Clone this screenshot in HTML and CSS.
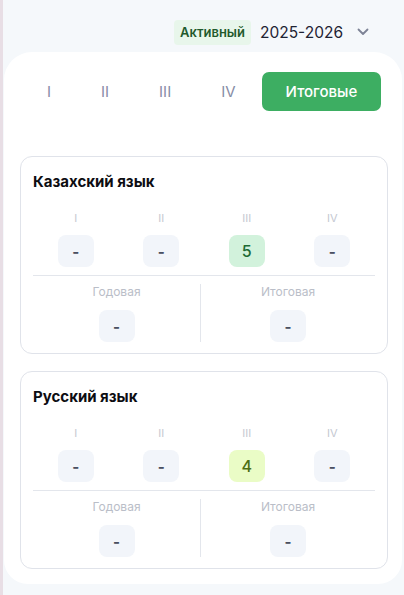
FILE: index.html
```html
<!DOCTYPE html>
<html lang="ru">
<head>
<meta charset="utf-8">
<link rel="stylesheet" href="styles.css">
</head>
<body>
<div class="page">
  <header class="top">
    <span class="badge">Активный</span>
    <span class="year">2025-2026</span>
    <svg class="chev" width="12" height="8" viewBox="0 0 12 8"><path d="M1.5 1.5 L6 6 L10.5 1.5" fill="none" stroke="#7d8396" stroke-width="1.8" stroke-linecap="round" stroke-linejoin="round"/></svg>
  </header>
  <main class="panel">
    <nav class="tabs">
      <span class="tab">I</span>
      <span class="tab">II</span>
      <span class="tab">III</span>
      <span class="tab">IV</span>
      <span class="tab active">Итоговые</span>
    </nav>
    <section class="card">
      <h2 class="title">Казахский язык</h2>
      <div class="quarters">
        <div class="q"><span class="ql">I</span><span class="box">-</span></div>
        <div class="q"><span class="ql">II</span><span class="box">-</span></div>
        <div class="q"><span class="ql">III</span><span class="box g5">5</span></div>
        <div class="q"><span class="ql">IV</span><span class="box">-</span></div>
      </div>
      <div class="totals">
        <div class="t"><span class="tl">Годовая</span><span class="box">-</span></div>
        <div class="t sep"><span class="tl">Итоговая</span><span class="box">-</span></div>
      </div>
    </section>
    <section class="card">
      <h2 class="title">Русский язык</h2>
      <div class="quarters">
        <div class="q"><span class="ql">I</span><span class="box">-</span></div>
        <div class="q"><span class="ql">II</span><span class="box">-</span></div>
        <div class="q"><span class="ql">III</span><span class="box g4">4</span></div>
        <div class="q"><span class="ql">IV</span><span class="box">-</span></div>
      </div>
      <div class="totals">
        <div class="t"><span class="tl">Годовая</span><span class="box">-</span></div>
        <div class="t sep"><span class="tl">Итоговая</span><span class="box">-</span></div>
      </div>
    </section>
  </main>
</div>
</body>
</html>
```

FILE: styles.css
```css
* { box-sizing: border-box; }
html, body { margin: 0; padding: 0; }
body {
  background: #f5f8fb;
  font-family: Inter, "Noto Sans", sans-serif;
  width: 404px;
  height: 595px;
  overflow: hidden;
}
.page {
  border-left: 3px solid #e8dee5;
  min-height: 595px;
}
.top {
  height: 52px;
  display: flex;
  justify-content: flex-end;
  align-items: center;
  padding: 12px 35px 0 0;
}
.badge {
  background: #e8f6eb;
  color: #1f5a2c;
  font-weight: 600;
  font-size: 13px;
  line-height: 25px;
  height: 25px;
  padding: 0 6px;
  border-radius: 4px;
}
.year {
  margin-left: 9px;
  font-size: 15.5px;
  color: #1e2333;
}
.chev { margin-left: 14px; }
.panel {
  margin-left: 1px;
  width: 398px;
  background: #fff;
  border-radius: 28px 28px 24px 24px;
  padding: 20px 14px 15px 16px;
}
.tabs {
  display: flex;
  align-items: center;
  height: 39px;
  padding-left: 3px;
  gap: 2px;
}
.tab {
  font-size: 15px;
  color: #878ca6;
  padding: 0 24px;
  line-height: 39px;
}
.tab.active {
  background: #3dae62;
  color: #fff;
  border-radius: 7px;
  padding: 0 24px;
  font-weight: 500;
}
.card {
  margin-top: 45px;
  border: 1px solid #e0e3ea;
  border-radius: 12px;
  padding: 15px 12px 11px;
  width: 368px;
}
.card + .card { margin-top: 17px; }
.title {
  margin: 0;
  font-size: 15px;
  font-weight: 700;
  line-height: 20px;
  color: #0d0d12;
}
.quarters {
  margin-top: 19px;
  display: grid;
  grid-template-columns: repeat(4, 1fr);
  padding-bottom: 8px;
  border-bottom: 1px solid #e3e6ec;
}
.q, .t {
  display: flex;
  flex-direction: column;
  align-items: center;
  gap: 10px;
}
.ql {
  font-size: 11px;
  line-height: 14px;
  color: #c4c8d1;
}
.box {
  width: 36px;
  height: 32px;
  border-radius: 8px;
  background: #f2f5fa;
  color: #4a5061;
  font-weight: 700;
  font-size: 15px;
  display: flex;
  align-items: center;
  justify-content: center;
}
.box.g5 { background: #d2f2dc; color: #1d6b35; font-weight: 500; font-size: 16px; }
.box.g4 { background: #eafcc6; color: #4c6e14; font-weight: 500; font-size: 16px; }
.totals {
  display: grid;
  grid-template-columns: 167px 1fr;
  margin-top: 8px;
}
.t.sep { border-left: 1px solid #e3e6ec; }
.tl {
  font-size: 12px;
  line-height: 16px;
  color: #babec8;
}
```
